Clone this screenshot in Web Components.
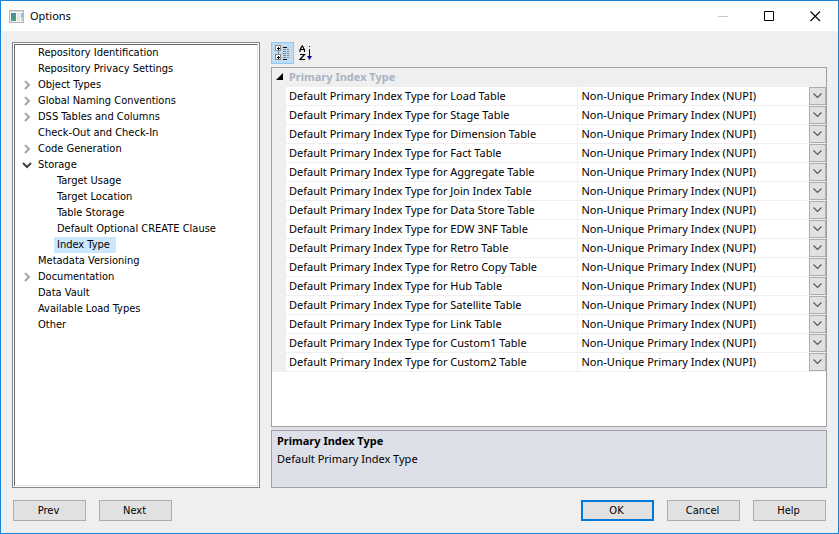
<!DOCTYPE html>
<html lang="en">
<head>
<meta charset="utf-8">
<title>Options</title>
<style>
  body {
    margin: 0;
    color: #000;
    font: 11px/16px "Noto Sans", "Open Sans", sans-serif;
    --tree-font: "DejaVu Sans Condensed", "DejaVu Sans", sans-serif;
  }
</style>
</head>
<body>
<options-window></options-window>

<script>
const define = (name, html, setup) => {
  const template = document.createElement('template');
  template.innerHTML = html;
  customElements.define(name, class extends HTMLElement {
    constructor() {
      super();
      this.attachShadow({ mode: 'open' }).append(template.content.cloneNode(true));
    }
    connectedCallback() {
      if (setup && !this.ready) { this.ready = true; setup(this, this.shadowRoot); }
    }
  });
};

/* Title bar with caption buttons */
define('title-bar', `
  <style>
    :host { display: flex; align-items: center; height: 30px; background: #fff; }
    .icon { margin: 0 6px 0 8px; flex: none; }
    h1 { flex: 1; margin: 0; font: inherit; }
    button { width: 46px; height: 30px; padding: 0; border: 0; background: none; display: grid; place-items: center; }
  </style>
  <svg class="icon" width="15" height="13" viewBox="0 0 15 13" aria-hidden="true">
    <defs><linearGradient id="g" x2="1" y2="1"><stop stop-color="#4a83a8"/><stop offset="1" stop-color="#4aa46b"/></linearGradient></defs>
    <rect x=".5" y=".5" width="14" height="12" fill="#f5f5f5" stroke="#b2b6b9"/>
    <path d="M1 1.5h13" stroke="#d5dadd"/>
    <rect x="2" y="3" width="5" height="8" fill="url(#g)"/>
    <rect x="8" y="3" width="3" height="8" fill="#e3e5e8"/>
    <rect x="12" y="3" width="2" height="4" fill="#9fb6dc"/>
    <rect x="12" y="7" width="2" height="4" fill="#c5dac8"/>
  </svg>
  <h1><slot></slot></h1>
  <button aria-label="Minimize" disabled><svg width="11" height="11"><path d="M0 5.5h10" stroke="#c8c8c8"/></svg></button>
  <button aria-label="Maximize"><svg width="11" height="11"><path d="M.5 .5h9v9h-9z" fill="none" stroke="#000"/></svg></button>
  <button aria-label="Close"><svg width="11" height="11"><path d="M.5 .5l9.500 9.500M10 .5L.5 10" stroke="#000" stroke-width="1.100"/></svg></button>
`);

/* One node of the tree; nested nodes go in the "children" slot */
define('tree-node', `
  <style>
    :host { display: block; }
    .row { display: flex; height: 16px; align-items: center; }
    svg { width: 12px; height: 12px; margin: 0 2px 0 4px; flex: none; fill: none; stroke-width: 2; visibility: hidden; }
    :host([state="closed"]) svg { visibility: visible; stroke: #a6a6a6; }
    :host([state="open"]) svg { visibility: visible; stroke: #404040; }
    :host([state="open"]) .closed, :host(:not([state="open"])) .open { display: none; }
    .label { padding: 0 6px 0 3px; line-height: 16px; white-space: nowrap; }
    :host([selected]) .label { background: #cce8ff; }
    .children { padding-left: 19px; }
  </style>
  <div class="row">
    <svg viewBox="0 0 12 12" aria-hidden="true"><path class="closed" d="M4 2l4 4-4 4"/><path class="open" d="M2 4l4 4 4-4"/></svg>
    <span class="label"><slot></slot></span>
  </div>
  <div class="children" role="group"><slot name="children"></slot></div>
`, host => {
  host.setAttribute('role', 'treeitem');
  if (host.hasAttribute('state')) host.setAttribute('aria-expanded', host.getAttribute('state') === 'open');
  if (host.hasAttribute('selected')) host.setAttribute('aria-selected', 'true');
});

define('tree-view', `
  <style>
    :host { display: block; box-sizing: border-box; padding: 1px; border: 1px solid #828790; background: #fff; font-family: var(--tree-font); }
    .inner { box-sizing: border-box; height: 100%; padding: 0 2px; border: 1px solid; border-color: #696969 #e3e3e3 #e3e3e3 #696969; }
  </style>
  <div class="inner" role="tree" aria-label="Option categories"><slot></slot></div>
`);

/* Square toolbar toggle */
define('tool-button', `
  <style>
    :host { display: block; }
    button { display: grid; place-items: center; width: 23px; height: 22px; padding: 0; border: 1px solid transparent; background: none; }
    :host([pressed]) button { border-color: #90c8f6; background: #c0dcf3; }
  </style>
  <button><slot></slot></button>
`, (host, root) => {
  const button = root.querySelector('button');
  button.setAttribute('aria-label', host.getAttribute('label'));
  button.setAttribute('aria-pressed', host.hasAttribute('pressed'));
});

/* Drop-down with a boxed chevron at its right end */
define('drop-down', `
  <style>
    :host { display: grid; grid-template-columns: 1fr 17px; height: 18px; }
    select { grid-area: 1 / 1 / 2 / 3; min-width: 0; margin: 0; padding: 0 20px 0 4px; border: 0; border-radius: 0; appearance: none; background: transparent; color: inherit; font: inherit; line-height: 18px; }
    .arrow { grid-area: 1 / 2; display: grid; place-items: center; border: 1px solid #adadad; background: #e1e1e1; pointer-events: none; }
  </style>
  <select><option></option></select>
  <span class="arrow"><svg width="9" height="6" aria-hidden="true"><path d="M.5 .5l4 4 4-4" fill="none" stroke="#555" stroke-width="1.100"/></svg></span>
`, (host, root) => {
  root.querySelector('select').setAttribute('aria-label', host.getAttribute('label'));
  root.querySelector('option').textContent = host.getAttribute('value');
});

define('property-grid', `
  <style>
    :host { display: block; border: 1px solid #a0a0a0; background: #fff; }
    table { width: 100%; border-collapse: collapse; table-layout: fixed; }
    .gutter { width: 14px; }
    .name { width: 291px; }
    th, td { height: 18px; padding: 0; text-align: left; font-weight: normal; line-height: 18px; white-space: nowrap; border-bottom: 1px solid #efefef; }
    thead th { background: #efefef; color: #a9b4c4; font-weight: bold; }
    tbody th { padding-left: 3px; border-right: 1px solid #efefef; }
    thead th:last-child { padding-left: 3px; }
    td:first-child { background: #efefef; }
    thead button { display: grid; place-items: center; width: 16px; height: 18px; padding: 0; border: 0; background: none; }
  </style>
  <table>
    <colgroup><col class="gutter"><col class="name"><col></colgroup>
    <thead><tr>
      <th><button aria-label="Collapse" aria-expanded="true"><svg width="8" height="8"><path d="M7 0v7H0z"/></svg></button></th>
      <th colspan="2" scope="colgroup"></th>
    </tr></thead>
    <tbody></tbody>
  </table>
`, (host, root) => {
  root.querySelector('[colspan]').textContent = host.getAttribute('category');
  const body = root.querySelector('tbody');
  for (const kind of host.getAttribute('tables').split(',')) {
    const row = body.insertRow();
    const name = 'Default Primary Index Type for ' + kind + ' Table';
    row.insertCell();
    const head = document.createElement('th');
    head.scope = 'row';
    head.textContent = name;
    row.append(head);
    const list = document.createElement('drop-down');
    list.setAttribute('label', name);
    list.setAttribute('value', 'Non-Unique Primary Index (NUPI)');
    row.insertCell().append(list);
  }
});

define('help-pane', `
  <style>
    :host { display: block; box-sizing: border-box; height: 58px; padding: 1px 5px; border: 1px solid #a0a0a0; background: #dde0e8; line-height: 18px; }
    h2, p { margin: 0; font: inherit; }
    h2 { font-weight: bold; }
  </style>
  <h2><slot name="title"></slot></h2>
  <p><slot></slot></p>
`);

define('push-button', `
  <style>
    :host { display: block; }
    button { display: block; width: 73px; height: 21px; padding: 1px 2px 0 0; border: 1px solid #adadad; background: #e1e1e1; color: inherit; font: inherit; font-family: var(--tree-font); }
    :host([default]) button { border: 2px solid #0078d7; }
  </style>
  <button><slot></slot></button>
`);

define('options-window', `
  <style>
    :host { display: flex; flex-direction: column; box-sizing: border-box; min-height: 100vh; border: 1px solid #1883d7; background: #efefef; }
    main { flex: 1; display: grid; grid-template-columns: 248px 1fr; gap: 11px; padding: 11px 11px 0; }
    .detail { display: flex; flex-direction: column; min-width: 0; }
    .tools { display: flex; padding-bottom: 3px; }
    .split { flex: 1; display: flex; flex-direction: column; gap: 3px; background: #dde0e8; }
    property-grid { flex: 1; }
    footer { display: flex; gap: 13px; padding: 12px; }
    .space { flex: 1; }
  </style>
  <title-bar>Options</title-bar>
  <main>
    <tree-view>
      <tree-node>Repository Identification</tree-node>
      <tree-node>Repository Privacy Settings</tree-node>
      <tree-node state="closed">Object Types</tree-node>
      <tree-node state="closed">Global Naming Conventions</tree-node>
      <tree-node state="closed">DSS Tables and Columns</tree-node>
      <tree-node>Check-Out and Check-In</tree-node>
      <tree-node state="closed">Code Generation</tree-node>
      <tree-node state="open">Storage
        <tree-node slot="children">Target Usage</tree-node>
        <tree-node slot="children">Target Location</tree-node>
        <tree-node slot="children">Table Storage</tree-node>
        <tree-node slot="children">Default Optional CREATE Clause</tree-node>
        <tree-node slot="children" selected>Index Type</tree-node>
      </tree-node>
      <tree-node>Metadata Versioning</tree-node>
      <tree-node state="closed">Documentation</tree-node>
      <tree-node>Data Vault</tree-node>
      <tree-node>Available Load Types</tree-node>
      <tree-node>Other</tree-node>
    </tree-view>
    <section class="detail">
      <div class="tools" role="toolbar" aria-label="Sort order">
        <tool-button label="Categorized" pressed>
          <svg width="16" height="16" viewBox="0 0 16 16" shape-rendering="crispEdges">
            <path d="M3.500 6v4" stroke="#888"/>
            <path d="M.5 .5h5v5h-5zM.5 9.500h5v5h-5z" fill="#fff" stroke="#888"/>
            <path d="M2 3.500h3M3.500 2v3M2 12.500h3M3.500 11v3M8 2.500h4M8 14.500h4" stroke="#000"/>
            <path d="M8 4.500h3m1 0h2M8 6.500h3m1 0h2M8 8.500h3m1 0h2M8 10.500h3m1 0h2M8 12.500h3m1 0h2" stroke="#888"/>
          </svg>
        </tool-button>
        <tool-button label="Alphabetical">
          <svg width="16" height="16" viewBox="0 0 16 16" fill="none">
            <path d="M2 7V5l2-4h.5l2 4v2M2.500 4.500h4M2 9.500h4.500L2 14.500h5" stroke="#000" stroke-width="1.200"/>
            <path d="M11.500 1v1m0 2v8" stroke="#00008b"/>
            <path d="M9 11h5l-2.500 4z" fill="#00008b"/>
          </svg>
        </tool-button>
      </div>
      <div class="split">
        <property-grid category="Primary Index Type" tables="Load,Stage,Dimension,Fact,Aggregate,Join Index,Data Store,EDW 3NF,Retro,Retro Copy,Hub,Satellite,Link,Custom1,Custom2"></property-grid>
        <help-pane><span slot="title">Primary Index Type</span>Default Primary Index Type</help-pane>
      </div>
    </section>
  </main>
  <footer>
    <push-button>Prev</push-button>
    <push-button>Next</push-button>
    <span class="space"></span>
    <push-button default>OK</push-button>
    <push-button>Cancel</push-button>
    <push-button>Help</push-button>
  </footer>
`);
</script>
</body>
</html>
